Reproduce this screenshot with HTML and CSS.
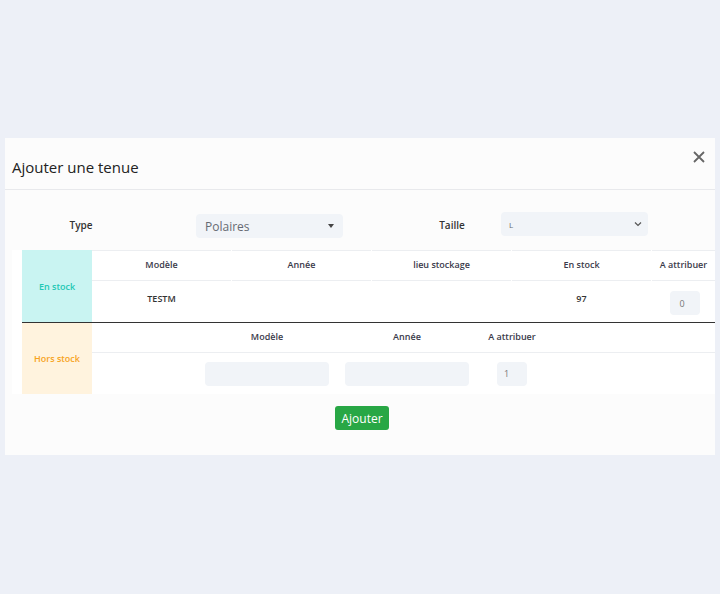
FILE: index.html
```html
<!DOCTYPE html>
<html lang="fr">
<head>
<meta charset="UTF-8">
<title>Ajouter une tenue</title>
<link rel="stylesheet" href="styles.css">
</head>
<body>
<div class="modal">
  <div class="modal-header">
    <h5>Ajouter une tenue</h5>
    <button class="close" aria-label="Fermer">
      <svg width="12" height="12" viewBox="0 0 12 12"><path d="M1 1L11 11M11 1L1 11" stroke="#666" stroke-width="1.8" fill="none"/></svg>
    </button>
  </div>
  <div class="modal-body">
    <div class="filters">
      <label class="lbl lbl-type">Type</label>
      <div class="fake-select">Polaires <span class="caret"></span></div>
      <label class="lbl lbl-taille">Taille</label>
      <div class="native-select">L
        <svg width="8" height="6" viewBox="0 0 8 6"><path d="M1 1.5L4 4.5L7 1.5" stroke="#555" stroke-width="1.2" fill="none"/></svg>
      </div>
    </div>
    <div class="tables">
      <div class="stock in">
        <div class="side side-in">En stock</div>
        <div class="grid grid-in">
          <div class="th">Modèle</div>
          <div class="th">Année</div>
          <div class="th">lieu stockage</div>
          <div class="th">En stock</div>
          <div class="th">A attribuer</div>
          <div class="td">TESTM</div>
          <div class="td"></div>
          <div class="td"></div>
          <div class="td">97</div>
          <div class="td"><span class="field small">0</span></div>
        </div>
      </div>
      <div class="stock out">
        <div class="side side-out">Hors stock</div>
        <div class="grid grid-out">
          <div class="th"></div>
          <div class="th">Modèle</div>
          <div class="th">Année</div>
          <div class="th">A attribuer</div>
          <div class="th"></div>
          <div class="td"></div>
          <div class="td"><span class="field wide"></span></div>
          <div class="td"><span class="field wide"></span></div>
          <div class="td"><span class="field small left">1</span></div>
          <div class="td"></div>
        </div>
      </div>
    </div>
    <div class="actions">
      <button class="btn-add">Ajouter</button>
    </div>
  </div>
</div>
</body>
</html>
```

FILE: styles.css
```css
body {
  margin: 0; padding: 138px 5px 0;
  background: #edf0f7;
  font-family: "Open Sans", "Noto Sans", sans-serif;
  color: #2f2f3f;
  height: 594px; box-sizing: border-box;
}
.modal {
  width: 710px; height: 317px;
  background: #fcfcfc;
  box-sizing: border-box;
}
.modal-header {
  display: flex; align-items: center; justify-content: space-between;
  height: 52px; padding: 0 10px 0 7px;
  border-bottom: 1px solid #e8e9ec;
  box-sizing: border-box;
}
.modal-header h5 {
  margin: 6px 0 0; font-size: 15px; font-weight: 400; color: #222;
}
.close {
  border: none; background: none; padding: 0; margin-top: -10px; cursor: pointer;
}
.filters {
  display: flex; align-items: center;
  height: 60px; padding-left: 17px;
}
.lbl { font-size: 10px; font-weight: 600; color: #333; text-align: center; margin-top: 10px; }
.lbl-type { width: 118px; }
.lbl-taille { width: 80px; margin-left: 69px; }
.fake-select {
  width: 147px; height: 24px; margin-left: 56px; margin-top: 12px;
  display: flex; align-items: center; justify-content: space-between;
  padding: 0 9px; box-sizing: border-box;
  background: #f1f4f8; border-radius: 4px;
  font-size: 12px; color: #666a72;
}
.caret {
  width: 0; height: 0;
  border-left: 3.5px solid transparent; border-right: 3.5px solid transparent;
  border-top: 4px solid #444;
}
.native-select {
  width: 147px; height: 24px; margin-left: 9px; margin-top: 8px;
  display: flex; align-items: center; justify-content: space-between;
  padding: 0 6px 0 8px; box-sizing: border-box;
  background: #f1f4f8; border-radius: 4px;
  font-size: 8px; color: #666a72;
}
.tables {
  background: #fff; margin-left: 7px; padding-left: 10px;
}
.stock { display: flex; }
.side {
  width: 70px; flex: none;
  display: flex; align-items: center; justify-content: center;
  font-size: 9px; font-weight: 600;
}
.side-in { background: #c9f4f2; color: #22c8b4; }
.side-out { background: #fff3de; color: #f7a31c; }
.grid { display: grid; flex: 1; }
.grid-in {
  grid-template-columns: 139px 139px 139px 139px 1fr;
  grid-template-rows: 31px 41px;
  column-gap: 1px;
}
.grid-in .th { border-top: 1px solid #eceef1; padding-bottom: 3px; }
.stock.out { border-top: 1.5px solid #333; }
.grid-out {
  grid-template-columns: 105px 140px 140px 70px 1fr;
  grid-template-rows: 30px 41px;
}
.th {
  display: flex; align-items: center; justify-content: center;
  font-size: 9px; font-weight: 600; color: #3a3a4a;
  border-bottom: 1px solid #eceef1;
}
.grid-out .th { padding-bottom: 2px; }
.td {
  display: flex; align-items: center; justify-content: center;
  font-size: 9px; font-weight: 600; color: #333;
}
.grid-in .td { padding-bottom: 7px; }
.grid-in .td:last-child { padding-bottom: 0; padding-top: 3px; }
.field {
  display: inline-flex; align-items: center;
  background: #f1f4f8; border-radius: 4px;
  height: 24px; box-sizing: border-box;
  font-size: 9px; font-weight: 400; color: #777;
}
.field.small { width: 30px; padding-left: 10px; }
.field.small.left { padding-left: 7px; }
.field.wide { width: 124px; }
.grid-in .field.small { margin-left: 2px; }
.actions { display: flex; justify-content: center; padding-top: 12px; padding-left: 4px; }
.btn-add {
  background: #28a745; color: #fff; border: none; border-radius: 3px;
  font-family: inherit; font-size: 12px;
  width: 54px; height: 24px; padding: 0; cursor: pointer;
}
```
